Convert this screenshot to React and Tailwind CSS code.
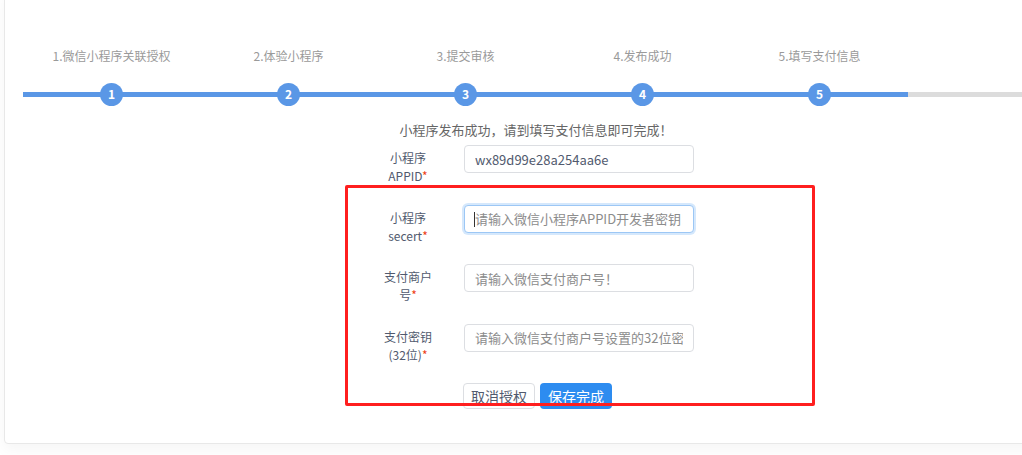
import React from "react";

const steps = ["1.微信小程序关联授权", "2.体验小程序", "3.提交审核", "4.发布成功", "5.填写支付信息"];

const fields = [
  { label: "小程序", tail: "APPID", value: "wx89d99e28a254aa6e" },
  { label: "小程序", tail: "secert", placeholder: "请输入微信小程序APPID开发者密钥！", focused: true },
  { label: "支付商户", tail: "号", placeholder: "请输入微信支付商户号！" },
  { label: "支付密钥", tail: "(32位)", placeholder: "请输入微信支付商户号设置的32位密钥" },
];

function Step({ title, num }) {
  return (
    <div className="w-[177px] shrink-0 flex flex-col items-center">
      <div className="h-4 text-[12px] leading-4 text-[#9a9a9a] whitespace-nowrap">{title}</div>
      <div className="relative mt-[18px] h-6 w-full flex items-center justify-center">
        <div className="absolute inset-x-0 top-[9.5px] h-[5px] bg-[#5a97e6]" />
        <div className="relative w-[23px] h-[23px] rounded-full bg-[#5a97e6] text-white text-[12px] font-bold flex items-center justify-center">
          {num}
        </div>
      </div>
    </div>
  );
}

function Field({ f }) {
  return (
    <div className="flex gap-[28px]">
      <div className="w-[56px] pt-[4px] text-center text-[12px] leading-[18px] text-[#515a6e]">
        {f.label}
        {f.tail}
        <span className="text-[#ed4014]">*</span>
      </div>
      <div className="relative">
        <input
          readOnly
          defaultValue={f.value}
          placeholder={f.placeholder}
          className={
            "w-[230px] h-[28px] rounded-[4px] border px-[10px] text-[13px] text-[#515a6e] placeholder:text-[#8c8c8c] outline-none bg-white " +
            (f.focused
              ? "border-[#9cc7f5] shadow-[0_0_0_2px_rgba(45,140,240,0.2)]"
              : "border-[#dcdee2]")
          }
        />
        {f.focused && <span className="absolute left-[10px] top-[7px] w-px h-[15px] bg-[#333]" />}
      </div>
    </div>
  );
}

export default function App() {
  return (
    <div className="relative h-screen overflow-hidden bg-white font-['Noto_Sans_CJK_SC','Noto_Sans',sans-serif]">
      <div className="ml-[4px] -mt-[10px] w-[1064px] rounded-[4px] border border-[#e8e8e8] bg-white pt-[57px] pb-[34px] shadow-[0_6px_14px_rgba(0,0,0,0.04)]">
        {/* steps */}
        <div className="flex pl-[18px]">
          {steps.map((s, i) => (
            <Step key={s} title={s} num={i + 1} />
          ))}
          <div className="flex-1 pt-[16px]">
            <div className="mt-[18px] h-6 pt-[9.5px]">
              <div className="h-[5px] bg-[#dcdcdc]" />
            </div>
          </div>
        </div>

        <div className="mt-[15px] text-center text-[13px] leading-[18px] text-[#666]">
          小程序发布成功，请到填写支付信息即可完成！
        </div>

        <div className="mt-[6px] flex justify-center">
          <div className="flex flex-col gap-[19.5px] ml-[2px]">
            {fields.map((f, i) => (
              <Field key={i} f={f} />
            ))}
            <div className="flex gap-[5px] pl-[83px]">
              <button className="h-[26px] px-[7px] rounded-[4px] border border-[#dcdee2] bg-white text-[14px] text-[#515a6e]">
                取消授权
              </button>
              <button className="h-[26px] px-[8px] rounded-[4px] bg-[#2d8cf0] text-[14px] text-white">
                保存完成
              </button>
            </div>
          </div>
        </div>
      </div>

      {/* annotation frame */}
      <div className="absolute left-[345px] top-[185px] w-[470px] h-[221px] border-[3px] border-[#ff1f1f] rounded-[2px] pointer-events-none" />
    </div>
  );
}
